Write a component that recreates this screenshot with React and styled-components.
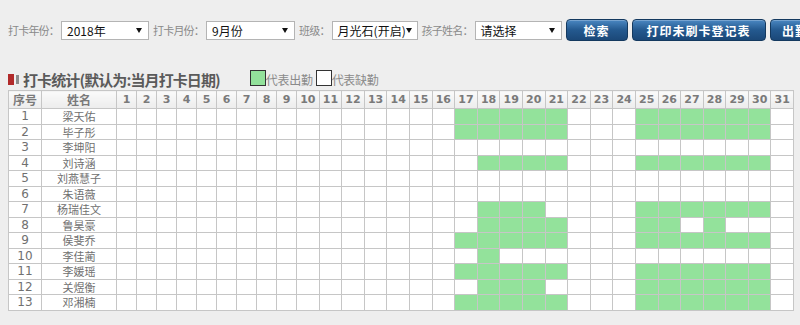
import React from "react";
import styled, { createGlobalStyle } from "styled-components";

const GlobalStyle = createGlobalStyle`
  html, body {
    margin: 0;
    padding: 0;
    background: #eeeeee;
    overflow: hidden;
    font-family: "Noto Sans CJK SC", "DejaVu Sans", sans-serif;
  }
`;

const Page = styled.div`
  padding: 19px 7px 0 8px;
  width: 800px;
  box-sizing: border-box;
`;

const Toolbar = styled.div`
  display: flex;
  align-items: center;
  white-space: nowrap;
  height: 22px;
`;

const Label = styled.span`
  flex-shrink: 0;
  font-size: 11px;
  letter-spacing: -0.8px;
  color: #8a8a8a;
  margin: 0 2px 0 ${(p) => p.$gap || 0}px;
`;

const FakeSelect = styled.div`
  width: ${(p) => p.$w}px;
  height: 19px;
  box-sizing: border-box;
  border: 1px solid #b4b4b4;
  background: #fff;
  display: flex;
  align-items: center;
  justify-content: space-between;
  padding: 0 6px 0 5px;
  font-size: 12px;
  color: #111;
  flex-shrink: 0;
`;

const Arrow = styled.span`
  width: 0;
  height: 0;
  border-left: 3px solid transparent;
  border-right: 3px solid transparent;
  border-top: 5px solid #111;
`;

const Button = styled.button`
  flex-shrink: 0;
  height: 22px;
  width: ${(p) => p.$w}px;
  margin-left: 4px;
  border-radius: 4px;
  border: 1px solid #14395f;
  background: linear-gradient(#4a87c2 0%, #24598f 50%, #1b4878 100%);
  box-shadow: inset 0 1px 0 rgba(255, 255, 255, 0.25);
  color: #fff;
  font-family: "Noto Sans CJK SC", sans-serif;
  font-size: 12px;
  font-weight: bold;
  letter-spacing: 1px;
  padding: 0;
  cursor: pointer;
`;

const TitleRow = styled.div`
  display: flex;
  align-items: center;
  margin-top: 27px;
  height: 22px;
`;

const Marker = styled.span`
  width: 6px;
  height: 11px;
  background: #b12a2a;
  margin-right: 2px;
`;

const MarkerBar = styled.span`
  width: 3px;
  height: 9px;
  background: #8c8c8c;
  margin-right: 4px;
`;

const Title = styled.span`
  font-size: 15px;
  font-weight: bold;
  color: #5a5a5a;
  letter-spacing: -0.9px;
`;

const Legend = styled.span`
  display: flex;
  align-items: center;
  margin-left: ${(p) => p.$gap}px;
  font-size: 12px;
  letter-spacing: -0.3px;
  color: #8a8a8a;
`;

const Swatch = styled.span`
  width: 14px;
  height: 14px;
  border: 1px solid #333;
  background: ${(p) => (p.$on ? "#93e29b" : "#fff")};
  margin-top: -3px;
`;

const Table = styled.table`
  border-collapse: collapse;
  table-layout: fixed;
  width: 785px;
  background: #fff;
  font-size: 12px;
  color: #6a6a6a;
`;

const Th = styled.th`
  height: 15px;
  border: 1px solid #c6c6c6;
  background: linear-gradient(#fafafa, #ececec);
  font-family: ${(p) => (p.$cjk ? '"Noto Sans CJK SC", sans-serif' : '"DejaVu Sans", sans-serif')};
  font-size: ${(p) => (p.$cjk ? 12 : 11)}px;
  font-weight: bold;
  color: #7a7a7a;
  padding: 0;
  text-align: center;
`;

const Td = styled.td`
  height: 14.5px;
  border: 1px solid #c6c6c6;
  background: ${(p) => (p.$on ? "#93e29b" : "#fff")};
  padding: 0;
  text-align: center;
  line-height: 14px;
  font-size: ${(p) => (p.$num ? 12 : 11)}px;
  font-family: ${(p) => (p.$num ? '"DejaVu Sans", sans-serif' : '"Noto Sans CJK SC", sans-serif')};
  color: #707070;
`;

const students = [
  "梁天佑", "毕子彤", "李坤阳", "刘诗涵", "刘燕慧子", "朱语薇", "杨瑞佳文",
  "鲁昊豪", "侯斐乔", "李佳蔺", "李媛瑶", "关煜衡", "邓湘楠",
];

const range = (a, b) => Array.from({ length: b - a + 1 }, (_, i) => a + i);
const full = [...range(17, 21), ...range(25, 30)];

const attendance = [
  full,
  full,
  [],
  [...range(18, 21), ...range(25, 30)],
  [],
  [],
  [...range(18, 20), ...range(25, 30)],
  [...range(18, 21), 25, 26, 28],
  full,
  [18],
  full,
  [...range(18, 20), ...range(25, 30)],
  full,
];

const days = range(1, 31);

export default function App() {
  return (
    <Page>
      <GlobalStyle />
      <Toolbar>
        <Label>打卡年份：</Label>
        <FakeSelect $w={88}>
          2018年<Arrow />
        </FakeSelect>
        <Label $gap={4}>打卡月份：</Label>
        <FakeSelect $w={89}>
          9月份<Arrow />
        </FakeSelect>
        <Label $gap={4}>班级：</Label>
        <FakeSelect $w={86}>
          月光石(开启)<Arrow />
        </FakeSelect>
        <Label $gap={4}>孩子姓名：</Label>
        <FakeSelect $w={87}>
          请选择<Arrow />
        </FakeSelect>
        <Button $w={62}>检索</Button>
        <Button $w={134}>打印未刷卡登记表</Button>
        <Button $w={90}>出勤统计表</Button>
      </Toolbar>

      <TitleRow>
        <Marker />
        <MarkerBar />
        <Title>打卡统计(默认为:当月打卡日期)</Title>
        <Legend $gap={30}>
          <Swatch $on />
          代表出勤
        </Legend>
        <Legend $gap={3}>
          <Swatch />
          代表缺勤
        </Legend>
      </TitleRow>

      <Table>
        <colgroup>
          <col style={{ width: 33 }} />
          <col style={{ width: 75 }} />
          {days.map((d) => (
            <col key={d} style={{ width: d < 10 ? 20 : 22.6 }} />
          ))}
        </colgroup>
        <thead>
          <tr>
            <Th $cjk>序号</Th>
            <Th $cjk>姓名</Th>
            {days.map((d) => (
              <Th key={d}>{d}</Th>
            ))}
          </tr>
        </thead>
        <tbody>
          {students.map((name, i) => (
            <tr key={name}>
              <Td $num>{i + 1}</Td>
              <Td>{name}</Td>
              {days.map((d) => (
                <Td key={d} $on={attendance[i].includes(d)} />
              ))}
            </tr>
          ))}
        </tbody>
      </Table>
    </Page>
  );
}
